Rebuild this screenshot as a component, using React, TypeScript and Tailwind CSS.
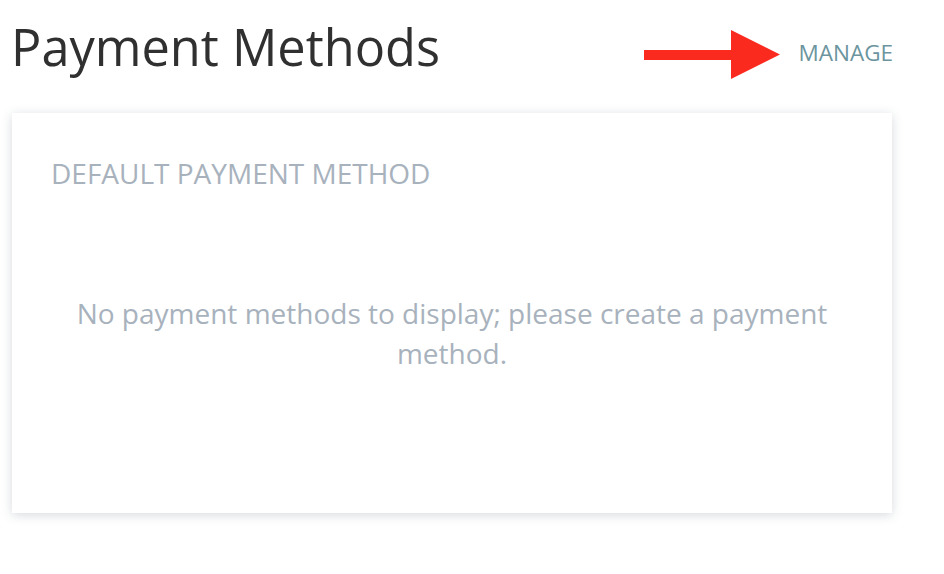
export default function App() {
  return (
    <div className="w-[944px] h-[574px] overflow-hidden bg-white font-['Open_Sans',sans-serif]">
      <div className="w-[880px] ml-[12px] pt-[17px]">
        {/* Header */}
        <div className="flex items-start justify-between">
          <h1 className="text-[50.5px] leading-[60px] text-[#303030] font-normal -ml-[1px]">
            Payment Methods
          </h1>
          <div className="flex items-start gap-[18px] mt-[13px] -mr-[1px]">
            <svg width="137" height="50" viewBox="0 0 137 50" className="block">
              <rect x="0" y="20" width="90" height="10" fill="#fb2a1e" />
              <polygon points="87,0 136,24.5 87,49" fill="#fb2a1e" />
            </svg>
            <a className="mt-[6px] text-[22.5px] text-[#6b959e] tracking-normal cursor-pointer">
              MANAGE
            </a>
          </div>
        </div>

        {/* Card */}
        <div className="mt-[33px] h-[400px] bg-white shadow-[0_2px_10px_rgba(70,85,105,0.22)] px-10 pt-[39px]">
          <div className="text-[28px] text-[#a8b2bd] -ml-[1px]">DEFAULT PAYMENT METHOD</div>
          <p className="mt-[99px] text-center text-[28px] leading-[40px] text-[#a8b2bd]">
            No payment methods to display; please create a payment method.
          </p>
        </div>
      </div>
    </div>
  )
}
